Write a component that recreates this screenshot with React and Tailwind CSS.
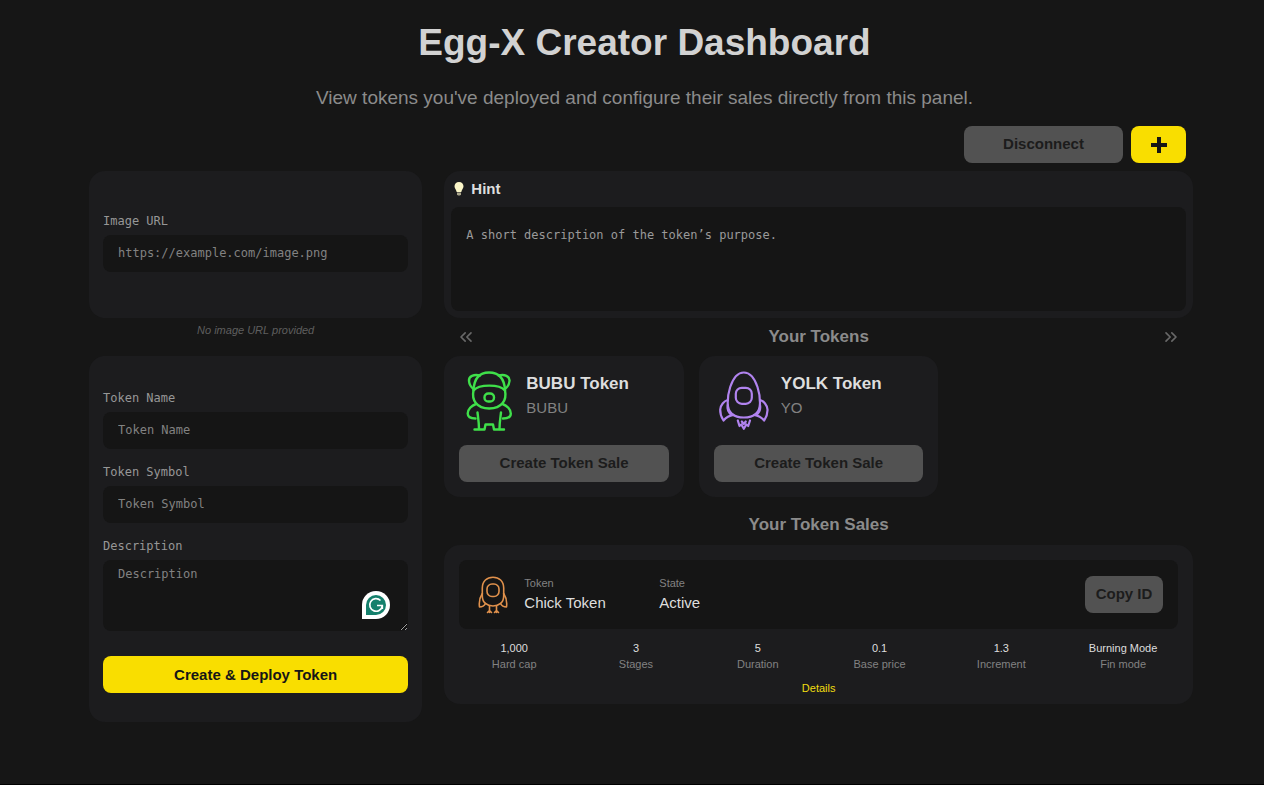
import { useState } from "react";
import { ChevronsLeft, ChevronsRight } from "lucide-react";

const tokens = [
  { id: 1, name: "BUBU Token", symbol: "BUBU", Icon: BearIcon },
  { id: 2, name: "YOLK Token", symbol: "YO", Icon: RocketIcon },
];

const saleStats = [
  { label: "Hard cap", value: "1,000" },
  { label: "Stages", value: "3" },
  { label: "Duration", value: "5" },
  { label: "Base price", value: "0.1" },
  { label: "Increment", value: "1.3" },
  { label: "Fin mode", value: "Burning Mode" },
];

function BearIcon() {
  return (
    <svg
      viewBox="0 0 60 60"
      className="size-15 shrink-0 text-[#3fe04a]"
      fill="none"
      stroke="currentColor"
      strokeWidth="2.4"
      strokeLinecap="round"
      strokeLinejoin="round"
    >
      {/* cap and ears */}
      <path d="M14.500 19.500C15 8 20 1.500 30 1.500S45.500 8 46 19.500" />
      <path d="M21 4.500C15 3 9.500 5 10 10C10.300 13.500 12 16 14.500 18" />
      <path d="M39.500 4.500C45.500 3 51 5 50.500 10C50.200 13.500 48.500 16 46 18" />
      {/* face */}
      <path d="M14.500 19.500C20 13 40.500 13 46 19.500C48 29 43 37.500 30.200 37.500S12.500 29 14.500 19.500Z" />
      <rect x="25.500" y="22.500" width="9.500" height="8" rx="3.800" />
      {/* body */}
      <path d="M17 33C12.500 34.500 8.700 38.500 8.700 42.500C8.700 46 12 47.500 16.500 47.500" />
      <path d="M43.500 33C48 34.500 51.800 38.500 51.800 42.500C51.800 46 48.500 47.500 44 47.500" />
      <path d="M18.500 41.500C19 46 20 51 20 58M42 41.500C41.500 46 40.500 51 40.500 58" />
      <path d="M15.500 58.500H25.500L26.500 53.500H34L35 58.500H45" />
    </svg>
  );
}

function RocketIcon() {
  return (
    <svg
      viewBox="0 0 60 60"
      className="size-15 shrink-0 text-[#b183ef]"
      fill="none"
      stroke="currentColor"
      strokeWidth="2.2"
      strokeLinecap="round"
      strokeLinejoin="round"
    >
      <path d="M29.800 1.500C36 1.500 40.500 7 43.500 16C45.500 22 46 27 46 32C46 41.500 40 46.500 29.800 46.500S13.700 41.500 13.700 32C13.700 27 14.200 22 16.200 16C19.200 7 23.500 1.500 29.800 1.500Z" />
      <rect x="21.800" y="16.800" width="16" height="16" rx="6" />
      <path d="M13.700 29C10 30 6.500 34 6.200 38.500C6 42.500 7.500 46.500 9.500 49.500C12 46.500 15.500 44.500 19.500 43.800M13.700 34C13 38 14.500 42 18 44" />
      <path d="M46 29C49.700 30 53.200 34 53.500 38.500C53.700 42.500 52.200 46.500 50.200 49.500C47.700 46.500 44.200 44.500 40.200 43.800M46 34C46.700 38 45.200 42 41.700 44" />
      <path d="M23.800 49.500L25.500 55L27.300 53.500L29.800 57.800L32.300 53.500L34.200 55L36 49.500M27.800 50.500L29.800 53L31.800 50.500" />
    </svg>
  );
}

function ChickIcon() {
  return (
    <svg
      viewBox="0 0 30 38"
      className="h-[38px] w-[30px] shrink-0 text-[#e0914c]"
      fill="none"
      stroke="currentColor"
      strokeWidth="1.600"
      strokeLinecap="round"
      strokeLinejoin="round"
    >
      <path d="M4.300 12C4.300 5 9 1.300 15 1.300S25.700 5 25.700 12V20C25.700 26.500 21 30 15 30S4.300 26.500 4.300 20Z" />
      <rect x="9" y="8" width="12" height="12.500" rx="5" />
      <path d="M4.300 17.500C2 21 0.800 26 1.500 31C4 31 6.500 29.500 7.500 27.500" />
      <path d="M25.700 17.500C28 21 29.200 26 28.500 31C26 31 23.500 29.500 22.500 27.500" />
      <path d="M11.500 30V36.500M18.500 30V36.500M9.500 36.500L11.500 34.500L13.500 36.500M16.500 36.500L18.500 34.500L20.500 36.500" />
    </svg>
  );
}

function BulbIcon() {
  return (
    <svg viewBox="0 0 12 16" className="h-4 w-3">
      <path
        d="M6 1C3.200 1 1.500 3 1.500 5.300C1.500 7.500 3.300 8.700 3.700 11H8.300C8.700 8.700 10.500 7.500 10.500 5.300C10.500 3 8.800 1 6 1Z"
        fill="#fbf6c8"
      />
      <path d="M4 11.500H8V13.500L7 14.500H5L4 13.500Z" fill="#a9a58c" />
    </svg>
  );
}

function WritingBadge() {
  return (
    <svg viewBox="0 0 28 28" className="absolute right-[18px] bottom-3 size-7">
      <path d="M0 28V14A14 14 0 1 1 14 28Z" fill="#fff" />
      <path d="M4 24V14A10 10 0 1 1 14 24Z" fill="#15806c" />
      <path
        d="M18.500 9.500A6.300 6.300 0 1 0 20.300 14.500H15M20.300 14.500V18"
        fill="none"
        stroke="#fff"
        strokeWidth="1.700"
      />
    </svg>
  );
}

function Field({ id, label, placeholder }) {
  const [value, setValue] = useState("");

  return (
    <div>
      <label htmlFor={id} className="block pb-1 leading-5 text-[#979797]">
        {label}
      </label>
      <input
        id={id}
        type="text"
        value={value}
        onChange={(e) => setValue(e.target.value)}
        placeholder={placeholder}
        className="block h-[37px] w-full rounded-lg bg-[#151515] px-[15px] pb-0.5 text-[#cfcfcf] outline-none placeholder:text-[#828282]"
      />
    </div>
  );
}

function TokenCard({ name, symbol, Icon }) {
  return (
    <div className="rounded-2xl bg-[#1c1c1e] p-[15px]">
      <div className="flex gap-[7px]">
        <Icon />
        <div className="pt-px">
          <h3 className="text-[17px] leading-6 font-bold text-[#dedede]">{name}</h3>
          <p className="text-[15px] leading-6 text-[#828282]">{symbol}</p>
        </div>
      </div>
      <button className="mt-[14px] h-[37px] w-full rounded-lg bg-[#525252] text-[15px] font-bold text-[#1c1c1c]">
        Create Token Sale
      </button>
    </div>
  );
}

function App() {
  const [description, setDescription] = useState("");

  return (
    <div className="min-h-screen border-b border-black bg-[#161616] pr-16 pl-[89px] font-['Liberation_Sans',Arial,sans-serif]">
      <header className="pt-[21px] text-center">
        <h1 className="text-[37px] leading-[44px] font-bold text-[#d2d2d2]">
          Egg-X Creator Dashboard
        </h1>
        <p className="pt-[19px] text-[19px] leading-7 text-[#8b8b8b]">
          View tokens you've deployed and configure their sales directly from this panel.
        </p>
      </header>

      <div className="flex justify-end gap-2 pt-[14px] pr-[14px] pb-2">
        <button className="h-[37px] w-[159px] rounded-lg bg-[#525252] text-[15px] font-bold text-[#1c1c1c]">
          Disconnect
        </button>
        <button
          aria-label="Add token"
          className="flex h-[37px] w-[55px] items-center justify-center rounded-lg bg-[#f9de00] text-[#161616]"
        >
          <svg viewBox="0 0 16 16" className="size-4" stroke="currentColor" strokeWidth="4">
            <path d="M8 0V16M0 8H16" />
          </svg>
        </button>
      </div>

      <main className="grid grid-cols-[3fr_7fr]">
        {/* Create form */}
        <form
          className="font-['DejaVu_Sans_Mono',monospace] text-xs"
          onSubmit={(e) => e.preventDefault()}
        >
          <div className="flex h-[147px] flex-col justify-center rounded-2xl bg-[#1c1c1e] px-[14px] pb-1.5">
            <Field id="image-url" label="Image URL" placeholder="https://example.com/image.png" />
          </div>
          <p className="h-[38px] pt-1 text-center font-['Liberation_Sans',Arial,sans-serif] text-[11px] leading-4 text-[#5f5f5f] italic">
            No image URL provided
          </p>
          <div className="flex flex-col gap-[13px] rounded-2xl bg-[#1c1c1e] px-[14px] pt-8 pb-[29px]">
            <Field id="token-name" label="Token Name" placeholder="Token Name" />
            <Field id="token-symbol" label="Token Symbol" placeholder="Token Symbol" />
            <div>
              <label htmlFor="description" className="block pb-1 leading-5 text-[#979797]">
                Description
              </label>
              <div className="relative">
                <textarea
                  id="description"
                  value={description}
                  onChange={(e) => setDescription(e.target.value)}
                  placeholder="Description"
                  className="block h-[71px] w-full resize-y rounded-lg bg-[#151515] px-[15px] py-1.5 leading-4 text-[#cfcfcf] outline-none placeholder:text-[#828282]"
                />
                <WritingBadge />
              </div>
            </div>
            <button className="mt-3 h-[37px] w-full rounded-lg bg-[#f9de00] font-['Liberation_Sans',Arial,sans-serif] text-[15px] font-bold text-[#161616]">
              Create &amp; Deploy Token
            </button>
          </div>
        </form>

        <div className="pr-[7px] pl-[22px]">
          {/* Hint */}
          <section className="h-[147px] rounded-2xl bg-[#1c1c1e] px-[7px]">
            <h2 className="flex h-9 items-center gap-1.5 pl-0.5 text-[15px] font-bold text-[#dedede]">
              <BulbIcon />
              Hint
            </h2>
            <p className="h-[104px] rounded-lg bg-[#151515] px-[15px] py-[18px] font-['DejaVu_Sans_Mono',monospace] text-xs leading-5 text-[#9a9a9a]">
              A short description of the token’s purpose.
            </p>
          </section>

          {/* Tokens */}
          <section>
            <div className="flex h-[38px] items-center justify-between px-3 text-[#686868]">
              <button aria-label="Previous tokens">
                <ChevronsLeft size={20} strokeWidth={2} />
              </button>
              <h2 className="text-[17px] font-bold text-[#8b8b8b]">Your Tokens</h2>
              <button aria-label="Next tokens">
                <ChevronsRight size={20} strokeWidth={2} />
              </button>
            </div>
            <div className="grid grid-cols-3 gap-[15px]">
              {tokens.map((token) => (
                <TokenCard key={token.id} {...token} />
              ))}
            </div>
          </section>

          {/* Token sales */}
          <section>
            <h2 className="pt-4 pb-2 text-center text-[17px] leading-6 font-bold text-[#8b8b8b]">
              Your Token Sales
            </h2>
            <div className="rounded-2xl bg-[#1c1c1e] px-[9px] pt-[15px] pb-2">
              <div className="mx-1.5 flex h-[69px] items-center rounded-lg bg-[#151515] px-[15px]">
                <div className="flex w-[185px] items-center gap-4 pl-1">
                  <ChickIcon />
                  <div className="pb-1">
                    <p className="text-[11px] leading-5 text-[#828282]">Token</p>
                    <p className="text-[15px] leading-5 text-[#dedede]">Chick Token</p>
                  </div>
                </div>
                <div className="pb-1">
                  <p className="text-[11px] leading-5 text-[#828282]">State</p>
                  <p className="text-[15px] leading-5 text-[#dedede]">Active</p>
                </div>
                <button className="ml-auto h-[37px] w-[78px] rounded-lg bg-[#525252] text-[15px] font-bold text-[#1c1c1c]">
                  Copy ID
                </button>
              </div>
              <dl className="grid grid-cols-6 pt-[11px] text-center text-[11px] leading-4">
                {saleStats.map((stat) => (
                  <div key={stat.label} className="flex flex-col-reverse">
                    <dt className="text-[#828282]">{stat.label}</dt>
                    <dd className="text-[#dedede]">{stat.value}</dd>
                  </div>
                ))}
              </dl>
              <div className="pt-2 text-center text-[11px] leading-4">
                <a href="#details" className="text-[#f0dc10]">
                  Details
                </a>
              </div>
            </div>
          </section>
        </div>
      </main>
    </div>
  );
}

export default App;
